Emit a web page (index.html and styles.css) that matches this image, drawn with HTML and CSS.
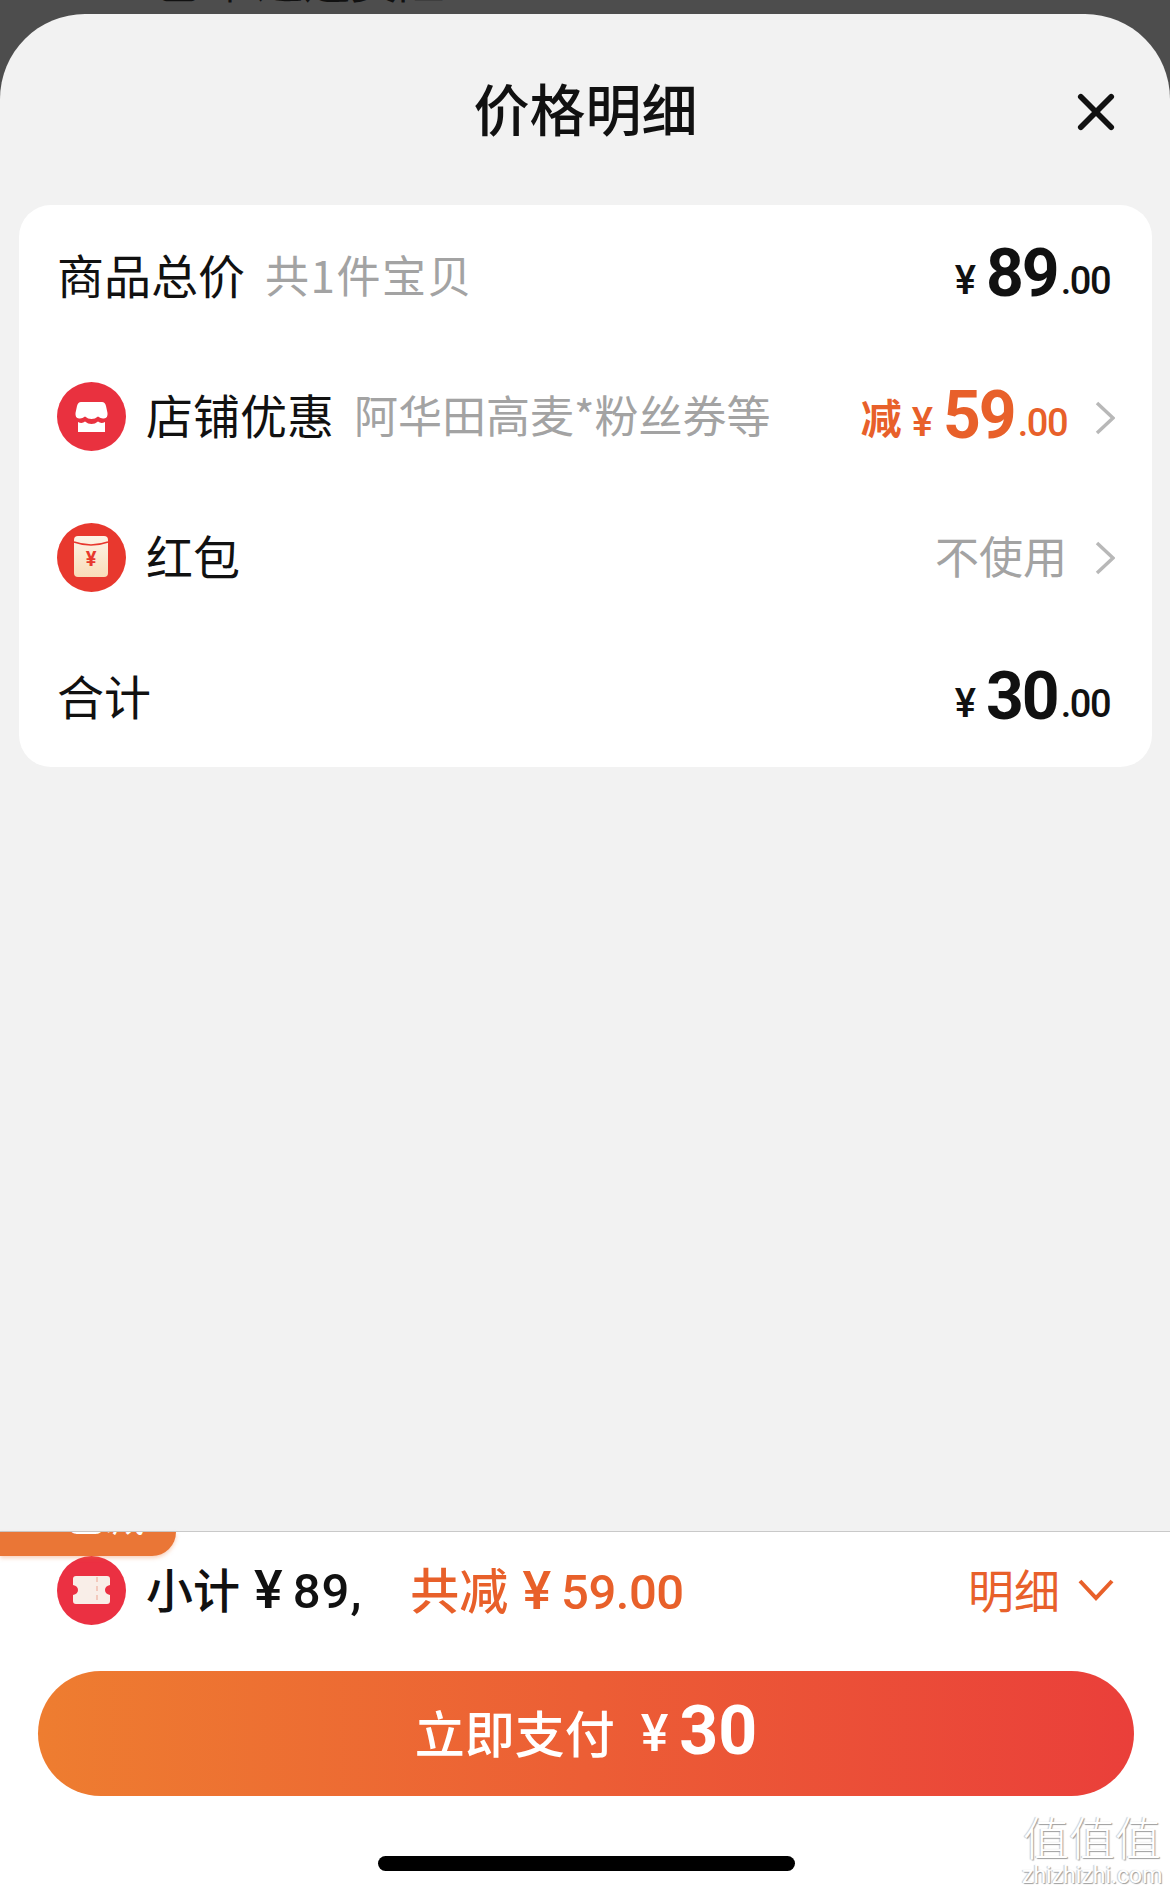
FILE: index.html
```html
<!DOCTYPE html>
<html>
<head>
  <meta charset="UTF-8">
  <meta name="viewport" content="width=device-width, initial-scale=1.0">
  <title>价格明细</title>
  <link rel="stylesheet" href="styles.css">
</head>
<body>
  <div class="behind"><span>包邮 退运费险</span></div>

  <div class="sheet">
    <div class="sheet-head">
      <h1>价格明细</h1>
      <svg class="close" viewBox="0 0 40 40"><path d="M4 4 L36 36 M36 4 L4 36"/></svg>
    </div>

    <div class="card">
      <div class="row">
        <span class="name">商品总价</span>
        <span class="note count">共1件宝贝</span>
        <span class="money">
          <span class="yen">¥</span><span class="big">89</span><span class="cents">.00</span>
        </span>
      </div>

      <div class="row">
        <svg class="icon" viewBox="0 0 69 69">
          <circle cx="34.5" cy="34.5" r="34.5" fill="#e9313f"/>
          <path fill="#fff" d="M24 20 H45 Q48 20 49 24 L50.5 31 Q51 36 47 36.5 Q44 37 41 34.5 Q38 37 34.5 37 Q31 37 28 34.5 Q25 37 22 36.5 Q18 36 18.5 31 L20 24 Q21 20 24 20 Z"/>
          <path fill="#fff" d="M21 40 Q25 42 28 39.5 Q31 42 34.5 42 Q38 42 41 39.5 Q44 42 48 40 V50 H21 Z"/>
        </svg>
        <span class="name">店铺优惠</span>
        <span class="note">阿华田高麦*粉丝券等</span>
        <span class="money orange">
          <span class="cut">减</span><span class="yen">¥</span><span class="big">59</span><span class="cents">.00</span>
        </span>
        <svg class="arrow" viewBox="0 0 20 34"><path d="M2 2 L18 17 L2 32"/></svg>
      </div>

      <div class="row">
        <svg class="icon" viewBox="0 0 69 69">
          <defs>
            <linearGradient id="packet" x1="0" y1="0" x2="0" y2="1">
              <stop offset="0" stop-color="#fdf4e8"/>
              <stop offset="1" stop-color="#f9dcb8"/>
            </linearGradient>
          </defs>
          <circle cx="34.5" cy="34.5" r="34.5" fill="#e8382e"/>
          <rect x="17" y="13" width="34" height="41" rx="4" fill="url(#packet)"/>
          <path d="M17 19 Q34 25 51 19" fill="none" stroke="#e8382e" stroke-width="1.5"/>
          <text x="34" y="43" class="icon-yen">¥</text>
        </svg>
        <span class="name">红包</span>
        <span class="money plain">不使用</span>
        <svg class="arrow" viewBox="0 0 20 34"><path d="M2 2 L18 17 L2 32"/></svg>
      </div>

      <div class="row">
        <span class="name">合计</span>
        <span class="money">
          <span class="yen">¥</span><span class="big">30</span><span class="cents">.00</span>
        </span>
      </div>
    </div>
  </div>

  <div class="footer">
    <div class="tag"><span>已减</span></div>

    <div class="summary">
      <svg class="icon" viewBox="0 0 69 69">
        <circle cx="34.5" cy="34.5" r="34.5" fill="#eb3042"/>
        <path fill="#f9eee8" d="M19 20 H50 Q53 20 53 23 V29 Q48 30 48 34 Q48 38 53 39 V45 Q53 48 50 48 H19 Q16 48 16 45 V39 Q21 38 21 34 Q21 30 16 29 V23 Q16 20 19 20 Z"/>
        <path d="M40 21 V47" stroke="#f3c9bd" stroke-width="2" stroke-dasharray="5 4"/>
      </svg>
      <span class="sub">小计<span class="sub-yen">¥</span><span class="sub-num">89,</span></span>
      <span class="saved">共减<span class="sub-yen">¥</span><span class="sub-num">59.00</span></span>
      <span class="detail">明细</span>
      <svg class="down" viewBox="0 0 36 24"><path d="M2 3 L18 20 L34 3"/></svg>
    </div>

    <div class="pay">
      <span class="pay-text">立即支付</span><span class="pay-yen">¥</span><span class="pay-num">30</span>
    </div>

    <div class="home-bar"></div>

    <div class="watermark">
      <div class="wm-logo">值值值</div>
      <div class="wm-url">zhizhizhi.com</div>
    </div>
  </div>
</body>
</html>
```

FILE: styles.css
```css
* {
  box-sizing: border-box;
}
html, body {
  margin: 0;
  height: 100%;
}
body {
  height: 1895px;
  overflow: hidden;
  display: flex;
  flex-direction: column;
  background: #4d4d4d;
  color: #111;
  font-family: "Noto Sans CJK SC", "Noto Sans", sans-serif;
}

.behind {
  height: 14px;
  overflow: hidden;
  padding-left: 152px;
}
.behind span {
  display: block;
  margin-top: -52px;
  font-size: 47px;
  line-height: 60px;
  color: #111;
  white-space: nowrap;
}

.sheet {
  flex: 1;
  background: #f2f2f2;
  border-radius: 85px 85px 0 0;
  padding: 0 18px 0 19px;
}
.sheet-head {
  height: 191px;
  padding-top: 43px;
  position: relative;
  text-align: center;
}
h1 {
  margin: 0;
  font-size: 56px;
  line-height: 100px;
  font-weight: 500;
}
.close {
  position: absolute;
  right: 37px;
  top: 79px;
  width: 38px;
  height: 38px;
  fill: none;
  stroke: #111;
  stroke-width: 6;
  stroke-linecap: round;
}

.card {
  background: #fff;
  border-radius: 32px;
  padding: 0 37px 0 38px;
}
.row {
  height: 140.5px;
  display: flex;
  align-items: center;
}
.icon {
  width: 69px;
  height: 69px;
  flex: none;
  margin-right: 20px;
}
.card .icon {
  margin-top: 2px;
}
.icon-yen {
  font-family: "Roboto", sans-serif;
  font-size: 20px;
  font-weight: 700;
  fill: #e8382e;
  text-anchor: middle;
}
.name {
  font-size: 47px;
  margin-bottom: 4px;
  white-space: nowrap;
}
.note {
  margin: 0 0 4px 20px;
  font-size: 44px;
  color: #a3a3a3;
  white-space: nowrap;
}
.count {
  margin-bottom: 2px;
  letter-spacing: 1.5px;
}
.money {
  margin: 17px 0 0 auto;
  padding-right: 5px;
  font-family: "Roboto", sans-serif;
  font-weight: 500;
  line-height: 70px;
  white-space: nowrap;
  color: #111;
}
.row:first-child .money {
  margin-top: 14px;
}
.yen {
  font-size: 40px;
  margin-right: 10px;
  vertical-align: 2px;
}
.big {
  font-size: 66px;
  font-weight: 700;
  letter-spacing: -2px;
}
.cents {
  font-size: 38px;
  letter-spacing: -1.5px;
  margin-left: 3px;
  vertical-align: 2px;
}
.orange {
  color: #e8602a;
  padding-right: 0;
}
.cut {
  font-family: "Noto Sans CJK SC", sans-serif;
  font-size: 41px;
  font-weight: 700;
  margin-right: 10px;
  vertical-align: 4px;
}
.money.plain {
  margin: 0 0 3px auto;
  padding-right: 0;
  font-family: "Noto Sans CJK SC", sans-serif;
  font-size: 44px;
  font-weight: 400;
  color: #a3a3a3;
}
.arrow {
  width: 20px;
  height: 34px;
  margin: 4px 0 0 28px;
  fill: none;
  stroke: #b8b8b8;
  stroke-width: 3.5;
}

.footer {
  height: 364px;
  flex: none;
  background: #fff;
  border-top: 1px solid #c9c9c9;
  padding: 18px 36px 0 38px;
  position: relative;
}
.tag {
  position: absolute;
  left: 0;
  top: 0;
  width: 176px;
  height: 24px;
  overflow: hidden;
  padding-left: 65px;
  background: #ea7636;
  border-radius: 0 0 32px 0;
  box-shadow: 0 2px 4px rgba(234, 118, 54, 0.35);
}
.tag span {
  display: block;
  margin-top: -46px;
  font-size: 40px;
  line-height: 56px;
  color: #fff;
}
.summary {
  height: 80px;
  padding: 0 0 0 19px;
  display: flex;
  align-items: center;
}
.sub, .saved {
  font-size: 47px;
  font-weight: 500;
  margin-bottom: 5px;
  white-space: nowrap;
}
.saved {
  margin-left: 48px;
  font-size: 49px;
  color: #e8602a;
}
.sub-yen {
  margin: 0 10px 0 14px;
  font-family: "Roboto", sans-serif;
  font-size: 54px;
}
.sub-num {
  font-family: "Roboto", sans-serif;
  font-size: 49px;
  letter-spacing: 1px;
}
.saved .sub-num {
  letter-spacing: -0.5px;
}
.detail {
  margin: 0 0 4px auto;
  font-size: 46px;
  color: #e8602a;
}
.down {
  width: 36px;
  height: 24px;
  margin: 0 20px 0 18px;
  fill: none;
  stroke: #e8602a;
  stroke-width: 4;
}
.pay {
  height: 125px;
  margin-top: 41px;
  border-radius: 63px;
  background: linear-gradient(90deg, #ee7d30, #ea3f3a);
  color: #fff;
  display: flex;
  align-items: center;
  justify-content: center;
  font-weight: 500;
}
.pay-text {
  font-size: 50px;
  padding-bottom: 5px;
}
.pay-yen {
  margin: 0 11px 0 26px;
  font-family: "Roboto", sans-serif;
  font-size: 52px;
}
.pay-num {
  font-family: "Roboto", sans-serif;
  font-size: 68px;
  font-weight: 700;
  margin-top: -6px;
}
.home-bar {
  width: 417px;
  height: 15px;
  margin: 60px auto 0 auto;
  background: #000;
  border-radius: 8px;
}
.watermark {
  position: absolute;
  right: 8px;
  bottom: 8px;
  width: 140px;
  text-align: center;
  color: #fff;
  text-shadow: 1px 1px 1px #9d9d9d, -1px 0 1px #c9c9c9;
}
.wm-logo {
  font-size: 46px;
  line-height: 54px;
  font-weight: 300;
}
.wm-url {
  margin-top: 3px;
  font-family: "Roboto", sans-serif;
  font-size: 23px;
  line-height: 22px;
}
```
